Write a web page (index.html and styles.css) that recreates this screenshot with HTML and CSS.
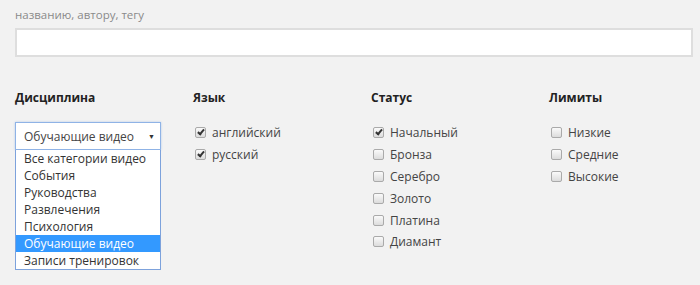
FILE: index.html
```html
<!DOCTYPE html>
<html lang="ru">
<head>
    <meta charset="UTF-8">
    <title>Фильтр видео</title>
    <link rel="stylesheet" href="styles.css">
</head>
<body>
    <div class="page">
        <!-- Поиск -->
        <div class="search">
            <label class="search-label">названию, автору, тегу</label>
            <input class="search-input" type="text">
        </div>

        <!-- Фильтры -->
        <div class="filters">
            <div class="filter">
                <h4>Дисциплина</h4>
                <div class="select-wrap">
                    <div class="select">
                        <span>Обучающие видео</span>
                        <span class="arrow">&#9660;</span>
                    </div>
                    <ul class="dropdown">
                        <li>Все категории видео</li>
                        <li>События</li>
                        <li>Руководства</li>
                        <li>Развлечения</li>
                        <li>Психология</li>
                        <li class="selected">Обучающие видео</li>
                        <li>Записи тренировок</li>
                    </ul>
                </div>
            </div>

            <div class="filter">
                <h4>Язык</h4>
                <ul class="checks">
                    <li><span class="box checked"></span>английский</li>
                    <li><span class="box checked"></span>русский</li>
                </ul>
            </div>

            <div class="filter">
                <h4>Статус</h4>
                <ul class="checks">
                    <li><span class="box checked"></span>Начальный</li>
                    <li><span class="box"></span>Бронза</li>
                    <li><span class="box"></span>Серебро</li>
                    <li><span class="box"></span>Золото</li>
                    <li><span class="box"></span>Платина</li>
                    <li><span class="box"></span>Диамант</li>
                </ul>
            </div>

            <div class="filter">
                <h4>Лимиты</h4>
                <ul class="checks">
                    <li><span class="box"></span>Низкие</li>
                    <li><span class="box"></span>Средние</li>
                    <li><span class="box"></span>Высокие</li>
                </ul>
            </div>
        </div>
    </div>
</body>
</html>
```

FILE: styles.css
```css
body {
    margin: 0;
    padding: 0;
    background-color: #f2f2f2;
    font-family: "Open Sans", Arial, sans-serif;
    color: #333;
}

.page {
    padding: 7px 7px 0 15px;
}

/* Поиск */
.search-label {
    display: block;
    font-size: 11.5px;
    line-height: 16px;
    color: #8a8a8a;
}

.search-input {
    display: block;
    box-sizing: border-box;
    width: 100%;
    height: 29px;
    margin: 5px 0 0 0;
    border: 2px solid #dedede;
    background-color: #fff;
    outline: none;
}

/* Фильтры */
.filters {
    display: grid;
    grid-template-columns: repeat(4, 178px);
    margin-top: 32px;
}

.filter h4 {
    margin: 0 0 15px 0;
    font-size: 12px;
    line-height: 18px;
    font-weight: bold;
    color: #222;
}

.select-wrap {
    width: 146px;
    margin-top: 1px;
}

.select {
    box-sizing: border-box;
    height: 28px;
    display: flex;
    justify-content: space-between;
    align-items: center;
    padding: 0 5px 0 8px;
    background-color: #fff;
    border: 1px solid #8fb3e6;
    box-shadow: 0 0 2px rgba(100, 150, 230, 0.4);
    font-size: 12px;
    color: #444;
}

.select .arrow {
    font-size: 7px;
    color: #333;
}

.dropdown {
    box-sizing: border-box;
    width: 146px;
    margin: 0;
    padding: 0;
    list-style: none;
    background-color: #fff;
    border: 1px solid #7da2dc;
    border-top: none;
}

.dropdown li {
    height: 17px;
    line-height: 17px;
    padding-left: 8px;
    font-size: 12px;
    color: #333;
    white-space: nowrap;
}

.dropdown li.selected {
    background-color: #3399ff;
    color: #fff;
}

/* Чекбоксы */
.checks {
    margin: 0;
    padding: 0;
    list-style: none;
}

.checks li {
    display: flex;
    align-items: center;
    height: 21.8px;
    font-size: 12px;
    color: #444;
}

.box {
    box-sizing: border-box;
    width: 11px;
    height: 11px;
    margin: 0 6px 0 2px;
    border: 1px solid #aaa;
    border-radius: 2px;
    background: linear-gradient(#fafafa, #dcdcdc);
    position: relative;
}

.box.checked::after {
    content: "";
    position: absolute;
    left: 3px;
    top: 0px;
    width: 2px;
    height: 5px;
    border-right: 2px solid #333;
    border-bottom: 2px solid #333;
    transform: rotate(40deg);
}
```
